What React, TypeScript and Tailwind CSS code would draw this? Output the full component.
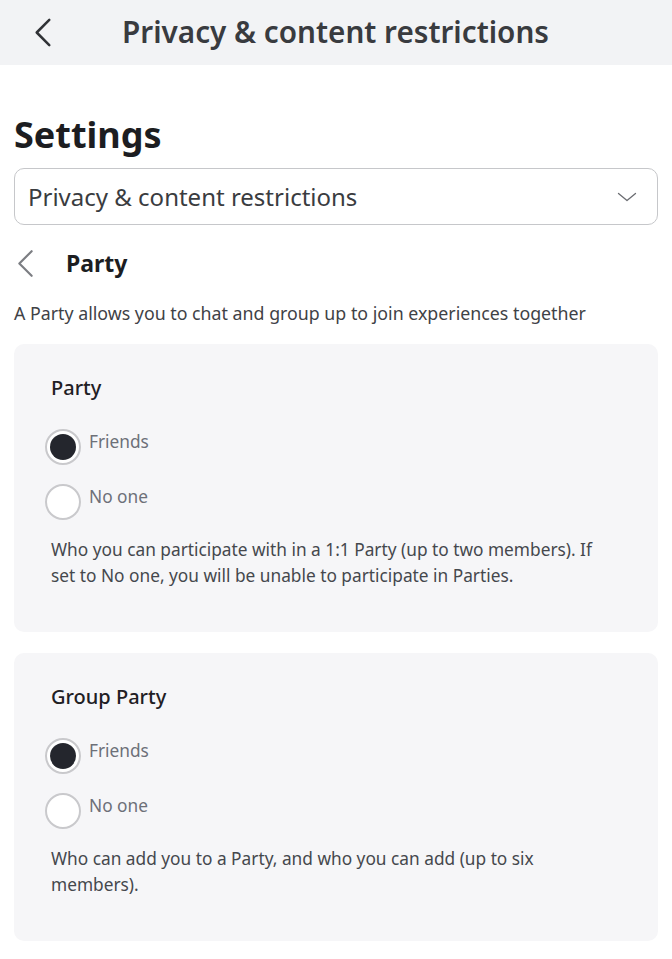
import { useState } from 'react';

type RadioOption = { value: string; label: string };

const OPTIONS: RadioOption[] = [
  { value: 'friends', label: 'Friends' },
  { value: 'none', label: 'No one' },
];

function Chevron({ className, stroke }: { className: string; stroke: number }) {
  // simple left-pointing chevron, tall and narrow like the app's back arrow
  return (
    <svg viewBox="0 0 18 30" className={className} fill="none" stroke="currentColor" strokeWidth={stroke} strokeLinecap="round" strokeLinejoin="round">
      <polyline points="15.5,2 2.5,15 15.5,28" />
    </svg>
  );
}

function RadioGroup({ value, onChange }: { value: string; onChange: (v: string) => void }) {
  return (
    <div className="-ml-[6px] mt-[27px] flex flex-col gap-[19px]">
      {OPTIONS.map((opt) => (
        <button
          key={opt.value}
          type="button"
          onClick={() => onChange(opt.value)}
          className="flex items-start gap-[8px] text-left"
        >
          <span className="flex h-[36px] w-[36px] shrink-0 items-center justify-center rounded-full border-2 border-[#c9c9cc] bg-white">
            {value === opt.value ? (
              <span className="h-[26px] w-[26px] rounded-full bg-[#24262d]" />
            ) : null}
          </span>
          <span className="mt-[1px] text-[17.3px] leading-[24px] text-[#6d7078]">{opt.label}</span>
        </button>
      ))}
    </div>
  );
}

function SettingCard({ title, description }: { title: string; description: string }) {
  const [value, setValue] = useState('friends');

  return (
    <section className="rounded-[10px] bg-[#f6f6f8] pb-[43px] pl-[37px] pr-[50px] pt-[30px]">
      <h3 className="text-[20px] font-medium leading-[28px] text-[#1f2024]">{title}</h3>
      <RadioGroup value={value} onChange={setValue} />
      <p className="mt-[17px] text-[17.3px] leading-[26px] text-[#45484d]">{description}</p>
    </section>
  );
}

export default function App() {
  return (
    <div className="min-h-[959px] bg-white" style={{ fontFamily: '"Noto Sans", Inter, sans-serif' }}>
      <header className="flex h-[65px] items-center bg-[#f2f3f5]">
        <Chevron className="ml-[34px] h-[29px] w-[18px] text-[#303236]" stroke={2.6} />
        <h1 className="ml-[70px] text-[29.7px] font-semibold text-[#393b3f]">
          Privacy &amp; content restrictions
        </h1>
      </header>

      <main className="px-[14px]">
        <h2 className="mt-[48px] text-[36px] font-bold leading-[44px] text-[#1c1d21]">Settings</h2>

        <div className="mt-[11px] flex h-[57px] items-center justify-between rounded-[10px] border border-[#c6c7ca] px-[13px]">
          <span className="text-[24px] text-[#3a3c40]">Privacy &amp; content restrictions</span>
          <svg viewBox="0 0 20 10" className="mr-[7px] h-[10px] w-[20px] text-[#6a6c71]" fill="none" stroke="currentColor" strokeWidth={1.3} strokeLinecap="round" strokeLinejoin="round">
            <polyline points="1.5,1.5 10,8.5 18.5,1.5" />
          </svg>
        </div>

        <div className="mt-[23px] flex h-[30px] items-center">
          <Chevron className="ml-[3px] h-[29px] w-[17px] text-[#7c7e83]" stroke={2.3} />
          <span className="ml-[32px] text-[23px] font-bold text-[#1c1d21]">Party</span>
        </div>

        <p className="mt-[23px] text-[17.8px] leading-[24px] text-[#3f4246]">
          A Party allows you to chat and group up to join experiences together
        </p>

        <div className="mt-[19px] flex flex-col gap-[21px]">
          <SettingCard
            title="Party"
            description="Who you can participate with in a 1:1 Party (up to two members). If set to No one, you will be unable to participate in Parties."
          />
          <SettingCard
            title="Group Party"
            description="Who can add you to a Party, and who you can add (up to six members)."
          />
        </div>
      </main>
    </div>
  );
}
